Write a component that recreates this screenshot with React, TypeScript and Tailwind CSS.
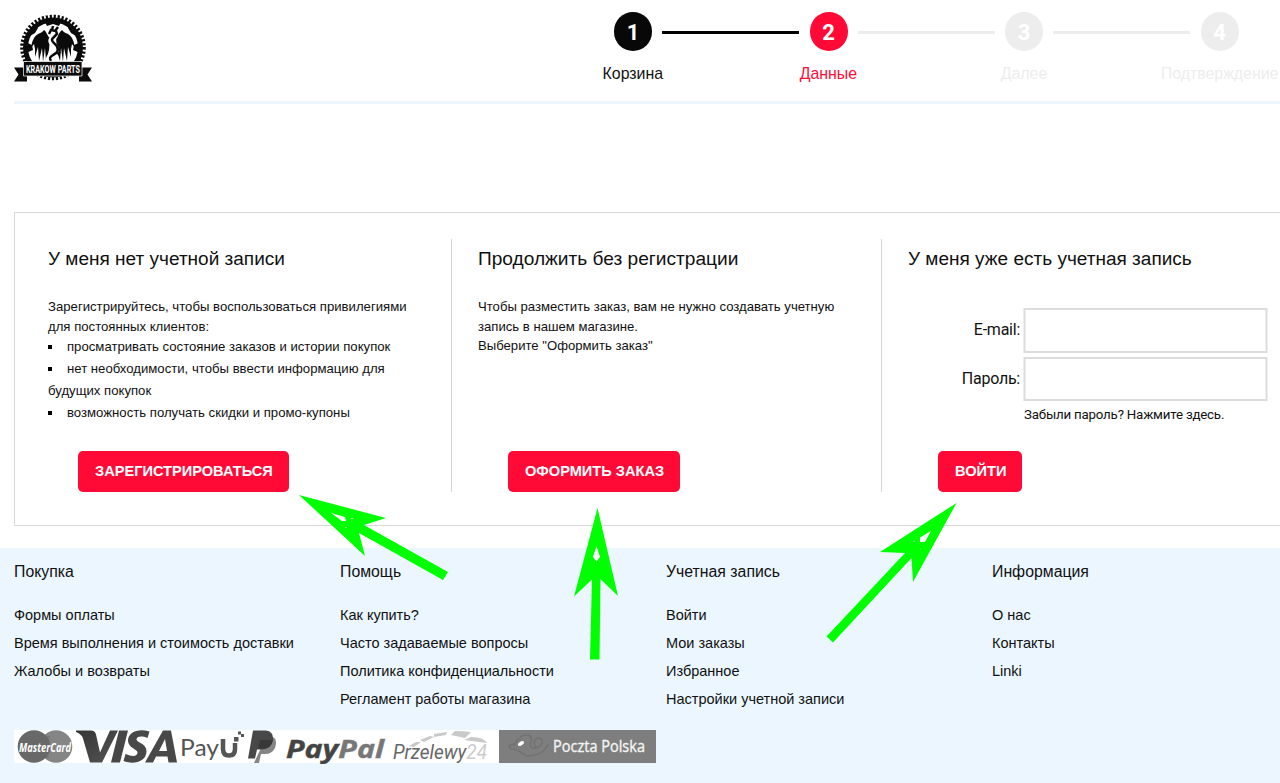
import React from "react";

const steps = [
  { n: "1", label: "Корзина", dot: "bg-[#080808]", bar: "bg-black", text: "text-[#111]" },
  { n: "2", label: "Данные", dot: "bg-[#ff0a37]", bar: "bg-[#ededed]", text: "text-[#ff0a37]" },
  { n: "3", label: "Далее", dot: "bg-[#ededed]", bar: "bg-[#ededed]", text: "text-[#ededed]" },
  { n: "4", label: "Подтверждение", dot: "bg-[#ededed]", bar: "", text: "text-[#ededed]" },
];

const footer = [
  { title: "Покупка", links: ["Формы оплаты", "Время выполнения и стоимость доставки", "Жалобы и возвраты"] },
  { title: "Помощь", links: ["Как купить?", "Часто задаваемые вопросы", "Политика конфиденциальности", "Регламент работы магазина"] },
  { title: "Учетная запись", links: ["Войти", "Мои заказы", "Избранное", "Настройки учетной записи"] },
  { title: "Информация", links: ["О нас", "Контакты", "Linki"] },
];

function Logo() {
  return (
    <svg width="78" height="70" viewBox="14 14 78 70" className="mt-3.5 block">
      <circle cx="53" cy="47.500" r="31" fill="none" stroke="#0b0b0b" strokeWidth="3.6" strokeDasharray="2.2 1.76" />
      <circle cx="53" cy="47.500" r="27.500" fill="none" stroke="#0b0b0b" strokeWidth="5" />
      <g fill="#0b0b0b">
        <path d="M44 20h18l-3 6-6-2-6 2zM27 33l8-9 3 4-3 5-5 3zM79 33l-8-9-3 4 3 5 5 3zM25 42l7 3 1 5-7 3zM81 42l-7 3-1 5 7 3z" />
        <path d="M50 38c-3-2-3-6-6-8-1 2-4 3-6 4-6 4-6 10-7 14l3-4 1 5v8l3-10 1 14 3-13 1 14 2-14 1 13 3-11zM56 37c3-2 3-5 6-7 1 2 4 3 6 4 6 4 6 10 7 14l-3-4-1 5v8l-3-10-1 14-3-13-1 14-2-14-1 13-3-10z" />
      </g>
      <path d="M50 32q5-3 6 1-1 4-3 5c-4 3-1 5 1 7 4 4 2 8-2 10-3 2-5 4-1 6" fill="none" stroke="#fff" strokeWidth="5.500" />
      <path d="M49 34l2-4 5 1 1 3-3 3c-4 3-1 5 1 7 5 4 3 9-2 11-3 2-4 3-2 6M52 30l1-4M55 31l3-4" fill="none" stroke="#0b0b0b" strokeWidth="2.5" />
      <path d="M56 53l5-1-2 4z" fill="#0b0b0b" />
      <path d="M14 67.500h13v14H14l4.500-7zM92 67.500H79v14h13l-4.500-7z" fill="#0b0b0b" />
      <path d="M23.500 61.500h58.500v14.500h-58.500z" fill="#0b0b0b" stroke="#fff" strokeWidth=".7" />
      <text x="26" y="72.600" textLength="54" lengthAdjust="spacingAndGlyphs" fill="#fff" fontSize="10" fontWeight="700" fontFamily="Roboto, sans-serif">KRAKOW PARTS</text>
    </svg>
  );
}

function Button({ children }: { children: React.ReactNode }) {
  return (
    <button className="ml-[30px] h-[41px] rounded-[5px] bg-[#ff0a37] pr-4 pl-[17px] text-[14.6px] leading-[41px] font-bold whitespace-nowrap text-white">
      {children}
    </button>
  );
}

function Bullet({ children }: { children: React.ReactNode }) {
  return (
    <li className="leading-[22px]">
      <span className="mr-[15px] inline-block size-1 bg-black align-[2px]" />
      {children}
    </li>
  );
}

function Payments() {
  return (
    <svg width="643" height="34" viewBox="14 730 643 34" className="block">
      <defs>
        <linearGradient id="visa" x1="0" y1="0" x2="1" y2="1">
          <stop offset="0" stopColor="#343434" />
          <stop offset="1" stopColor="#555" />
        </linearGradient>
      </defs>
      <path d="M14 730h642v33H14z" fill="#fff" />
      <circle cx="56" cy="746.500" r="16.300" fill="#858585" />
      <circle cx="34" cy="746.500" r="16.300" fill="#686868" />
      <path d="M42 737h8M41 740h8M40 754h9M41 757h8" stroke="#686868" />
      <text x="19" y="751.500" textLength="52" lengthAdjust="spacingAndGlyphs" fill="#fff" fontFamily="Open Sans" fontSize="13" fontWeight="700" fontStyle="italic">MasterCard</text>
      <path d="M76 730.500H91q4 0 5 4l4 18 10-22h8l-16 32H90l-7-24q-1-4-7-6.500z" fill="url(#visa)" />
      <path d="M119 730.500h9l-8 32h-9z" fill="#474747" />
      <path d="M149.500 731.500l-2 6.500c-6-2.500-11-1.600-11 1.500 0 3 10 4 10 11.500 0 11-13 14-23 10l2-7c7 3 12 2.500 12-1.500 0-3.500-9.500-4.500-9.500-12 0-9 11-12.500 21.500-9z" fill="#484848" />
      <path fillRule="evenodd" d="M163 730.500h8l6 32h-8.500l-1-6H156l-3 6h-8zM165 739l-6 12h8z" fill="#484848" />
      <text x="180" y="756" textLength="39" lengthAdjust="spacingAndGlyphs" fontFamily="Lato" fontSize="23" fill="#555">Pay</text>
      <path d="M223 739v10q0 6.500 6 6.500t6-6.500v-6" fill="none" stroke="#555" strokeWidth="4.500" />
      <path d="M234 737h4.500v4.500h-4.500zM238 731.500h3v3h-3zM241 734h3v3h-3z" fill="#555" />
      <path d="M266 737h7q5 3 2 11-3 6-10 6h-4l-2 9h-5z" fill="#858585" />
      <path d="M253 730.500h13q8 1 7 10-2 8-10 9h-6l-2 9h-7z" fill="#484848" />
      <path d="M260 740h13q-2 8-8 8.500h-7z" fill="#383838" />
      <text x="286" y="757.500" textLength="98" lengthAdjust="spacingAndGlyphs" fontFamily="Open Sans" fontSize="25.500" fontStyle="italic" fontWeight="700" fill="#444" stroke="#444" strokeWidth=".4">Pay<tspan fill="#777" stroke="#777">Pal</tspan></text>
      <text x="393" y="759" textLength="94" lengthAdjust="spacingAndGlyphs" fontFamily="Roboto" fontSize="19.500" fontStyle="italic" fill="#666">Przelewy<tspan fill="#ccc">24</tspan></text>
      <g fill="#c9c9c9">
        <path d="M409 746l7-4 5 0-7 5zM420 740l10-4 4 1-10 5zM434 734l13-2-1 3-12 2zM455 731q9 0 16 1l-6 6-14-3zM464 740l7-3q13 0 16 6z" />
      </g>
      <path d="M499 730h157v33H499z" fill="#7e7e7e" />
      <g fill="none" stroke="#727272" strokeWidth="1.500">
        <path d="M515 744c-6 0-8 4-3 5 10 0 9 8 19 7 8-1 14-4 17-12M514 747c2-8 10-15 16-11 5 3-4 10 3 12 8 1 13-9 6-10-5 0-6 6-3 9" />
      </g>
      <ellipse cx="521" cy="743.500" rx="3.300" ry="1.900" transform="rotate(-35 521 743.500)" fill="#fff" />
      <text x="553" y="752" textLength="92" lengthAdjust="spacingAndGlyphs" fontFamily="Open Sans" fontSize="15.500" fill="#f4f4f4" stroke="#f4f4f4" strokeWidth=".35">Poczta Polska</text>
    </svg>
  );
}

function Arrows() {
  return (
    <svg width="1280" height="783" viewBox="0 0 1280 783" className="pointer-events-none absolute top-0 left-0">
      <g fill="#00ff00">
        <path d="M299 495l87 23-22 7 84 47-5 8-84-47 6 23z" />
        <path d="M597.500 508l20.500 88-17.500-17-1 80.500h-9.500l2-80-18 17z" />
        <path d="M956.500 503l-43.500 79-1.500-24-78.500 84.500-6.500-6L905 553l-25-1z" />
      </g>
      <path d="M331 513l14 4 1 4-4 0zM340 521l5-1-1 1zM351 518l2 0-1 1.500zM345 527l2 0-1 1zM596.500 546l-3.500 11 3.500 4.500 3.500-4.500zM931 531l-11 6.500 0 4.500 5 0zM912.500 542.500l2-2 0 1zM920 549l1.500-1-1.500 2z" fill="#fff" />
    </svg>
  );
}

export default function App() {
  return (
    <div className="relative h-[783px] w-[1280px] overflow-hidden bg-white font-['Liberation_Sans',sans-serif] text-[#111]">
      <header className="ml-3.5 flex h-[104px] w-[1400px] border-b-[3px] border-[#ebf6ff]">
        <Logo />
        <div className="ml-[443px] pt-3">
          <div className="flex pl-[79px]">
            {steps.map((s) => (
              <div key={s.n} className="flex w-[195.5px] shrink-0 items-center">
                <span className={`flex h-[39px] w-[38px] items-center justify-center rounded-full font-[Roboto,sans-serif] text-[22px] font-bold text-white ${s.dot}`}>
                  <span className="pt-0.5">{s.n}</span>
                </span>
                <span className={`mt-[2px] ml-2.5 h-[3.500px] w-[137px] ${s.bar}`} />
              </div>
            ))}
          </div>
          <div className="mt-[13px] flex">
            {steps.map((s) => (
              <span key={s.n} className={`w-[195.6px] shrink-0 text-center text-[15.9px] leading-5 ${s.text}`}>{s.label}</span>
            ))}
          </div>
        </div>
      </header>

      <main className="mt-[108px] ml-3.5 flex h-[314px] w-[1330px] border border-[#d9d9d9] px-[7px] pt-[26px] pb-[33px]">
        <section className="flex w-[430px] flex-col border-r border-[#d5d5d5] pl-[26px]">
          <h2 className="mt-2 text-[19.03px] leading-6">У меня нет учетной записи</h2>
          <div className="mt-[26px] text-[13.17px] leading-[19.5px]">
            <p className="whitespace-nowrap">Зарегистрируйтесь, чтобы воспользоваться привилегиями<br />для постоянных клиентов:</p>
            <ul>
              <Bullet>просматривать состояние заказов и истории покупок</Bullet>
              <Bullet>нет необходимости, чтобы ввести информацию для<br />будущих покупок</Bullet>
              <Bullet>возможность получать скидки и промо-купоны</Bullet>
            </ul>
          </div>
          <div className="mt-auto"><Button>ЗАРЕГИСТРИРОВАТЬСЯ</Button></div>
        </section>
        <section className="flex w-[430px] flex-col border-r border-[#d5d5d5] pl-[26px]">
          <h2 className="mt-2 text-[19.12px] leading-6">Продолжить без регистрации</h2>
          <p className="mt-[26px] text-[13.13px] leading-[19.5px] whitespace-nowrap">
            Чтобы разместить заказ, вам не нужно создавать учетную<br />запись в нашем магазине.<br />Выберите "Оформить заказ"
          </p>
          <div className="mt-auto"><Button>ОФОРМИТЬ ЗАКАЗ</Button></div>
        </section>
        <section className="flex w-[430px] flex-col pl-[26px]">
          <h2 className="mt-2 text-[19.03px] leading-6">У меня уже есть учетная запись</h2>
          <div className="mt-[37px] grid w-[360px] grid-cols-[112px_244px] items-center gap-x-1 gap-y-1 font-[Roboto,sans-serif] text-base tracking-[-0.25px]">
            <label className="text-right">E-mail:</label>
            <input className="h-[44.500px] -translate-x-[0.5px] border-2 border-[#dcdcdc]" />
            <label className="text-right">Пароль:</label>
            <input type="password" className="h-[44.500px] -translate-x-[0.5px] border-2 border-[#dcdcdc]" />
            <a className="col-start-2 text-[13.3px] leading-5 tracking-[-0.2px]">Забыли пароль? Нажмите здесь.</a>
          </div>
          <div className="mt-auto"><Button>ВОЙТИ</Button></div>
        </section>
      </main>

      <footer className="mt-[22px] h-[240px] bg-[#ebf6ff] pt-3.5 pl-3.5">
        <div className="flex h-[168px]">
          {footer.map((col) => (
            <div key={col.title} className="w-[326px] shrink-0">
              <h3 className="text-[15.84px] leading-5">{col.title}</h3>
              <ul className="mt-[18.5px] text-[14.5px] leading-[28.2px]">
                {col.links.map((l) => <li key={l}>{l}</li>)}
              </ul>
            </div>
          ))}
        </div>
        <Payments />
      </footer>
      <Arrows />
    </div>
  );
}
